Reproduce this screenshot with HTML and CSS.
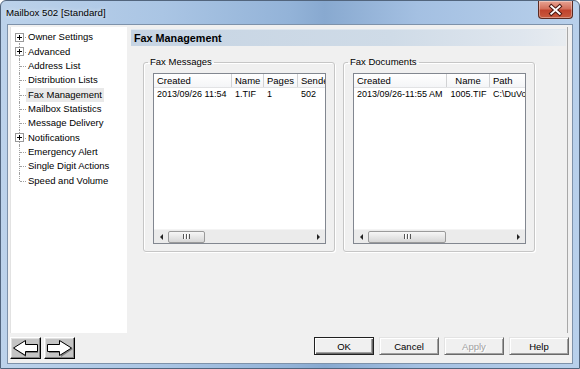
FILE: index.html
```html
<!DOCTYPE html>
<html lang="en">
<head>
  <meta charset="UTF-8">
  <title>Mailbox 502 [Standard]</title>
  <link rel="stylesheet" href="styles.css">
</head>
<body>
  <div class="window">
    <div class="titlebar">
      <span class="title">Mailbox 502 [Standard]</span>
      <button class="close" aria-label="Close">
        <svg width="35" height="18" viewBox="0 0 35 18">
          <path d="M13 5 L22 13 M22 5 L13 13" stroke="#4a1711" stroke-width="4" stroke-linecap="square"/>
          <path d="M13 5 L22 13 M22 5 L13 13" stroke="#fff" stroke-width="2" stroke-linecap="square"/>
        </svg>
      </button>
    </div>

    <div class="client">
      <div class="main">
        <ul class="tree">
          <li class="node first"><span class="expander"></span><span class="label">Owner Settings</span></li>
          <li class="node"><span class="expander"></span><span class="label">Advanced</span></li>
          <li class="node"><span class="label">Address List</span></li>
          <li class="node"><span class="label">Distribution Lists</span></li>
          <li class="node selected"><span class="label">Fax Management</span></li>
          <li class="node"><span class="label">Mailbox Statistics</span></li>
          <li class="node"><span class="label">Message Delivery</span></li>
          <li class="node"><span class="expander"></span><span class="label">Notifications</span></li>
          <li class="node"><span class="label">Emergency Alert</span></li>
          <li class="node"><span class="label">Single Digit Actions</span></li>
          <li class="node last"><span class="label">Speed and Volume</span></li>
        </ul>

        <div class="pane">
          <div class="pane-header">Fax Management</div>
          <div class="groups">
            <fieldset class="group">
              <legend>Fax Messages</legend>
              <div class="listview messages">
                <div class="lv-head">
                  <div class="col c-created">Created</div>
                  <div class="col c-name">Name</div>
                  <div class="col c-pages">Pages</div>
                  <div class="col c-sender">Sender</div>
                </div>
                <div class="lv-body">
                  <div class="lv-row">
                    <div class="cell c-created">2013/09/26 11:54</div>
                    <div class="cell c-name">1.TIF</div>
                    <div class="cell c-pages">1</div>
                    <div class="cell c-sender">502</div>
                  </div>
                </div>
                <div class="hscroll">
                  <span class="sb-btn"><span class="arrow-left"></span></span>
                  <span class="track"><span class="thumb"><span class="grip"></span></span></span>
                  <span class="sb-btn"><span class="arrow-right"></span></span>
                </div>
              </div>
            </fieldset>

            <fieldset class="group">
              <legend>Fax Documents</legend>
              <div class="listview documents">
                <div class="lv-head">
                  <div class="col c-created">Created</div>
                  <div class="col c-name">Name</div>
                  <div class="col c-path">Path</div>
                </div>
                <div class="lv-body">
                  <div class="lv-row">
                    <div class="cell c-created">2013/09/26-11:55 AM</div>
                    <div class="cell c-name">1005.TIF</div>
                    <div class="cell c-path">C:\DuVoice\Fax</div>
                  </div>
                </div>
                <div class="hscroll">
                  <span class="sb-btn"><span class="arrow-left"></span></span>
                  <span class="track"><span class="thumb"><span class="grip"></span></span></span>
                  <span class="sb-btn"><span class="arrow-right"></span></span>
                </div>
              </div>
            </fieldset>
          </div>
        </div>
      </div>

      <div class="footer">
        <div class="nav">
          <button class="nav-btn" aria-label="Back">
            <svg width="29" height="20" viewBox="0 0 29 20">
              <polygon points="3,11 15,3 15,7 27,7 27,15 15,15 15,19" fill="#7c7c7c"/>
              <polygon points="2.5,10 14.5,2.5 14.5,6.5 26.5,6.5 26.5,13.5 14.5,13.5 14.5,17.5" fill="#fff" stroke="#000" stroke-width="1"/>
            </svg>
          </button>
          <button class="nav-btn" aria-label="Forward">
            <svg width="29" height="20" viewBox="0 0 29 20">
              <polygon points="28,11 16,3 16,7 4,7 4,15 16,15 16,19" fill="#7c7c7c"/>
              <polygon points="26.5,10 14.5,2.5 14.5,6.5 2.5,6.5 2.5,13.5 14.5,13.5 14.5,17.5" fill="#fff" stroke="#000" stroke-width="1"/>
            </svg>
          </button>
        </div>
        <div class="actions">
          <button class="btn btn-default">OK</button>
          <button class="btn">Cancel</button>
          <button class="btn" disabled>Apply</button>
          <button class="btn">Help</button>
        </div>
      </div>
    </div>
  </div>
</body>
</html>
```

FILE: styles.css
```css
/* page */
html, body {
  margin: 0; padding: 0;
  width: 580px; height: 369px; overflow: hidden;
  font-family: 'Liberation Sans', Arial, sans-serif;
  font-size: 9.5px; color: #000;
  background: #fff;
}
button { font-family: inherit; cursor: default; }

/* window frame */
.window {
  box-sizing: border-box; height: 369px;
  border: 1px solid #52657d; border-radius: 6px 6px 0 0;
  background: linear-gradient(to right, #bcd2ea 0%, #aac5e4 28%, #93b3d8 50%, #88a9d0 56%, #a4c0e2 72%, #b8d0eb 100%);
  display: flex; flex-direction: column;
}
.titlebar {
  height: 23px; flex: none;
  display: flex; align-items: flex-start;
  padding: 0 5px 0 5px;
}
.title {
  flex: 1; margin-top: 1px;
  line-height: 22px; font-size: 9.7px;
  text-shadow: 0 0 5px rgba(255,255,255,0.8);
}
.close {
  width: 35px; height: 18px; padding: 0; margin-right: 1px;
  border: 1px solid #5a2a22; border-top: none; border-radius: 0 0 4px 4px;
  background: linear-gradient(#e8a493 0%, #d3705c 45%, #c0432d 55%, #c85a3e 100%);
  box-shadow: inset 0 0 0 1px rgba(255,255,255,0.35);
  display: flex; align-items: center; justify-content: center;
}
.close svg { display: block; }

/* client area */
.client {
  flex: 1; margin: 0 6px 4px;
  border: 1px solid #7e92aa;
  background: #f0f0f0;
  display: flex; flex-direction: column;
}
.main { display: flex; height: 308px; flex: none; }

/* tree */
.tree {
  box-sizing: border-box;
  width: 117px; height: 306px; margin: 2px 0 0 2px;
  padding: 3px 0 0; list-style: none;
  background: #fff; border-left: 1px solid #e2e2e2;
}
.node {
  position: relative; height: 14.35px;
  display: flex; align-items: center;
  padding-left: 15px;
  white-space: nowrap;
}
.node::before {
  content: ''; position: absolute; left: 8px; top: 0; bottom: 0;
  border-left: 1px dotted #a0a0a0;
}
.node.first::before { top: 50%; }
.node.last::before { bottom: 50%; }
.node::after {
  content: ''; position: absolute; left: 9px; top: 50%; width: 6px;
  border-top: 1px dotted #a0a0a0;
}
.expander {
  position: absolute; left: 4px; top: 3px; z-index: 1;
  box-sizing: border-box; width: 9px; height: 9px;
  border: 1px solid #999;
  background:
    linear-gradient(#000, #000) center / 5px 1px no-repeat,
    linear-gradient(#000, #000) center / 1px 5px no-repeat,
    #fff;
}
.label { padding: 0 2px; line-height: 14px; }
.selected .label { background: #e9e9e9; }

/* right pane */
.pane {
  flex: 1; height: 306px; box-sizing: border-box;
  margin: 2px 4px 0 2px; padding: 2px 1px 0 2px;
  border-right: 1px solid #a8a8a8;
}
.pane-header {
  height: 17px; line-height: 17px; padding-left: 3px;
  font-size: 10.8px; font-weight: bold;
  background: linear-gradient(to right, #c6d4e3 0%, #cfdbe7 60%, #dfe6ee 90%, #e8ecf0 100%);
  border-top: 1px solid #dfe7ef; box-sizing: border-box;
}
.groups { display: flex; gap: 8px; margin-top: 10px; padding-left: 12px; }

/* group boxes */
.group {
  box-sizing: border-box; width: 192px; min-width: 0;
  margin: 0; padding: 5px 8px 7px 9px;
  border: 1px solid #c6c6c6; border-radius: 3px;
  box-shadow: inset 1px 1px #fff, 1px 1px #fff;
}
.group legend {
  padding: 0 2px; margin-left: -5px;
  line-height: 12px; font-size: 9.5px;
}

/* list views */
.listview {
  box-sizing: border-box; height: 171px;
  border: 1px solid #828790; background: #fff;
  display: flex; flex-direction: column; overflow: hidden;
}
.lv-head {
  flex: none; display: flex; height: 14px; box-sizing: border-box;
  border-bottom: 1px solid #e2e3e5;
  background: linear-gradient(#fff, #f4f5f7);
  white-space: nowrap;
}
.lv-head .col {
  flex: none; box-sizing: border-box;
  padding-left: 3px; line-height: 13px;
  border-right: 1px solid #d1d2d4;
}
.lv-body { flex: 1; }
.lv-row { display: flex; height: 13px; line-height: 13px; font-size: 9px; white-space: nowrap; }
.lv-row .cell { flex: none; box-sizing: border-box; padding-left: 3px; overflow: hidden; }

.messages .c-created { width: 78px; }
.messages .c-name { width: 32px; }
.messages .c-pages { width: 34px; }
.messages .c-sender { width: 50px; }
.documents .c-created { width: 93px; }
.documents .c-name { width: 43px; text-align: center; padding-left: 0; }
.documents .c-path { width: 70px; }

/* horizontal scroll bar */
.hscroll {
  flex: none; height: 13px;
  display: flex; align-items: center;
  background: #ebebeb; border-top: 1px solid #f4f4f4;
}
.sb-btn { width: 14px; height: 13px; display: flex; align-items: center; justify-content: center; flex: none; }
.arrow-left { border-right: 3px solid #222; border-top: 3px solid transparent; border-bottom: 3px solid transparent; }
.arrow-right { border-left: 3px solid #222; border-top: 3px solid transparent; border-bottom: 3px solid transparent; }
.track { flex: 1; height: 13px; display: flex; align-items: center; }
.thumb {
  box-sizing: border-box; height: 12px;
  border: 1px solid #9a9a9a; border-radius: 2px;
  background: linear-gradient(#f6f6f6, #e6e6e6 50%, #d6d6d6);
  display: flex; align-items: center; justify-content: center;
}
.messages .thumb { width: 37px; }
.documents .thumb { width: 78px; }
.grip {
  width: 7px; height: 5px;
  background: repeating-linear-gradient(to right, #555 0 1px, #fff 1px 2px, transparent 2px 3px);
}

/* footer buttons */
.footer { flex: 1; display: flex; align-items: flex-start; padding: 4px 3px 0 2px; }
.nav { display: flex; gap: 3px; }
.nav-btn {
  box-sizing: border-box; width: 31px; height: 22px; padding: 0;
  background: #c4c4c4;
  border: 1px solid; border-color: #fff #000 #000 #fff;
  box-shadow: inset -1px -1px #808080, inset 1px 1px #e0e0e0;
  display: flex; align-items: center; justify-content: center;
}
.nav-btn svg { display: block; }
.actions { margin-left: auto; display: flex; gap: 5px; }
.btn {
  box-sizing: border-box; width: 60px; height: 18px; padding: 0;
  font-size: 9.5px; color: #000;
  background: #f0f0f0;
  border: 1px solid; border-color: #e3e3e3 #696969 #696969 #e3e3e3;
  box-shadow: inset 1px 1px #fff, inset -1px -1px #a0a0a0;
}
.btn-default {
  border-color: #202020;
  box-shadow: inset 1px 1px #fff, inset -1px -1px #696969, inset -2px -2px #a0a0a0;
}
.btn:disabled { color: #a0a0a0; text-shadow: 1px 1px #fff; }
```
